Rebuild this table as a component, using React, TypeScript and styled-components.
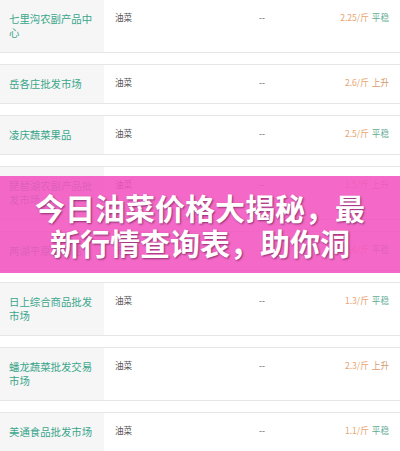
import styled, { createGlobalStyle } from "styled-components";

const GlobalStyle = createGlobalStyle`
  html, body {
    margin: 0;
    padding: 0;
    background: #ffffff;
  }
  body {
    font-family: "Noto Sans CJK SC", "Noto Sans", sans-serif;
    width: 400px;
    height: 451px;
    overflow: hidden;
  }
`;

const Page = styled.div`
  position: relative;
  width: 400px;
  height: 451px;
  overflow: hidden;
`;

const List = styled.div`
  display: flex;
  flex-direction: column;
  gap: 11px;
  margin-top: -1px;
`;

const Row = styled.div`
  display: grid;
  grid-template-columns: 104px 155px auto 1fr;
  border-top: 1px solid #e6e6e6;
  border-bottom: 1px solid #e6e6e6;
  background: #ffffff;
`;

const NameCell = styled.div`
  background: #f6f6f6;
  padding: 12px 10px 12px 9px;
  font-size: 10.4px;
  line-height: 14px;
  color: #3aa68b;
`;

const Cell = styled.div`
  padding-top: 11px;
  font-size: 8.6px;
  line-height: 12px;
  color: #555555;
`;

const VarietyCell = styled(Cell)`
  padding-left: 11px;
`;

const PriceCell = styled(Cell)`
  text-align: right;
  padding-right: 11px;
`;

const Price = styled.span`
  color: #e7a572;
`;

const Trend = styled.span<{ $up: boolean }>`
  margin-left: 3px;
  color: ${(p) => (p.$up ? "#d59c70" : "#5fad93")};
`;

const Banner = styled.div`
  position: absolute;
  left: 0;
  top: 176px;
  width: 400px;
  height: 97px;
  background: rgba(242, 84, 192, 0.88);
  display: flex;
  align-items: center;
  justify-content: center;
`;

const Title = styled.h1`
  margin: 0;
  width: 340px;
  text-align: center;
  font-size: 30px;
  line-height: 35px;
  font-weight: 700;
  color: #ffffff;
  text-shadow: 1px 1px 2px rgba(60, 0, 40, 0.55);
`;

type Market = { name: string; price: string; up: boolean };

const markets: Market[] = [
  { name: "七里沟农副产品中心", price: "2.25", up: false },
  { name: "岳各庄批发市场", price: "2.6", up: true },
  { name: "凌庆蔬菜果品", price: "2.5", up: false },
  { name: "琵琶湖农副产品批发市场", price: "1.5", up: true },
  { name: "两湖平原农产品", price: "1.6", up: false },
  { name: "日上综合商品批发市场", price: "1.3", up: false },
  { name: "蟠龙蔬菜批发交易市场", price: "2.3", up: true },
  { name: "美通食品批发市场", price: "1.1", up: false },
];

export default function App() {
  return (
    <Page>
      <GlobalStyle />
      <List>
        {markets.map((m) => (
          <Row key={m.name}>
            <NameCell>{m.name}</NameCell>
            <VarietyCell>油菜</VarietyCell>
            <Cell>--</Cell>
            <PriceCell>
              <Price>{m.price}/斤</Price>
              <Trend $up={m.up}>{m.up ? "上升" : "平稳"}</Trend>
            </PriceCell>
          </Row>
        ))}
      </List>
      <Banner>
        <Title>今日油菜价格大揭秘，最新行情查询表，助你洞</Title>
      </Banner>
    </Page>
  );
}
